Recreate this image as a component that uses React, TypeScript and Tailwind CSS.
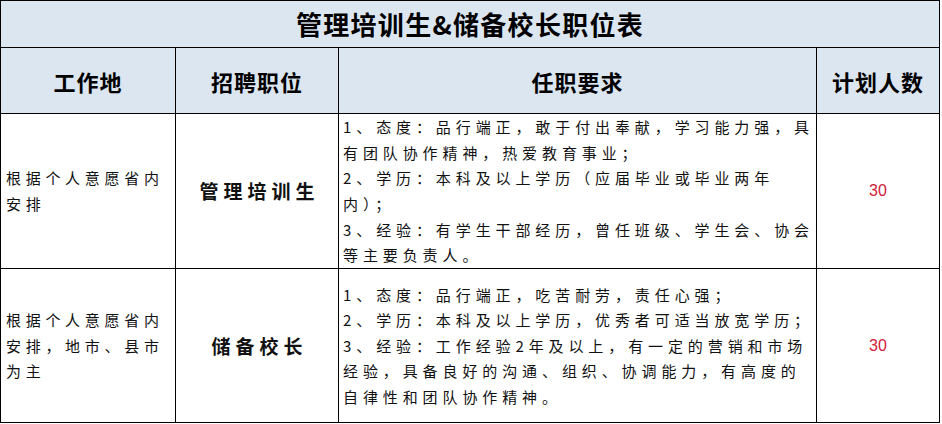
import React from "react";

const row1Lines = [
  "1、态度：品行端正，敢于付出奉献，学习能力强，具",
  "有团队协作精神，热爱教育事业；",
  "2、学历：本科及以上学历（应届毕业或毕业两年",
  "内）；",
  "3、经验：有学生干部经历，曾任班级、学生会、协会",
  "等主要负责人。",
];

const row2Lines = [
  "1、态度：品行端正，吃苦耐劳，责任心强；",
  "2、学历：本科及以上学历，优秀者可适当放宽学历；",
  "3、经验：工作经验2年及以上，有一定的营销和市场",
  "经验，具备良好的沟通、组织、协调能力，有高度的",
  "自律性和团队协作精神。",
];

function Lines({ lines }: { lines: string[] }) {
  return (
    <div className="flex flex-col">
      {lines.map((l, i) => (
        <div key={i} className="whitespace-nowrap">
          {l}
        </div>
      ))}
    </div>
  );
}

export default function App() {
  return (
    <div className="w-[942px] h-[424px] bg-white text-black font-['Noto_Sans_CJK_SC',sans-serif]">
      <table className="table-fixed border-collapse w-[939px]">
        <colgroup>
          <col className="w-[175px]" />
          <col className="w-[163px]" />
          <col className="w-[478px]" />
          <col className="w-[123px]" />
        </colgroup>
        <tbody>
          <tr className="h-[47px]">
            <td
              colSpan={4}
              className="border border-black bg-[#dce6f1] text-center align-middle text-[26px] font-bold tracking-[1.3px] leading-none"
            >
              管理培训生&amp;储备校长职位表
            </td>
          </tr>
          <tr className="h-[66px] bg-[#dce6f1] text-[22px] font-bold leading-none">
            <td className="border border-black text-center align-middle tracking-[1px]">工作地</td>
            <td className="border border-black text-center align-middle tracking-[1px]">招聘职位</td>
            <td className="border border-black text-center align-middle tracking-[1px]">任职要求</td>
            <td className="border border-black text-center align-middle tracking-[1px]">计划人数</td>
          </tr>
          <tr className="h-[155px] text-[15px] leading-[25.6px] text-[#111]">
            <td className="border border-black align-middle pl-[5px] tracking-[4.7px]">
              <Lines lines={["根据个人意愿省内", "安排"]} />
            </td>
            <td className="border border-black align-middle text-center text-[19px] font-bold tracking-[5px] pl-[5px]">
              管理培训生
            </td>
            <td className="border border-black align-middle pl-[4px] tracking-[4.9px]">
              <Lines lines={row1Lines} />
            </td>
            <td className="border border-black align-middle text-center font-['Liberation_Sans',sans-serif] text-[16px] text-[#d0203a]">
              30
            </td>
          </tr>
          <tr className="h-[154px] text-[15px] leading-[25.6px] text-[#111]">
            <td className="border border-black align-middle pl-[5px] tracking-[4.7px]">
              <Lines lines={["根据个人意愿省内", "安排，地市、县市", "为主"]} />
            </td>
            <td className="border border-black align-middle text-center text-[19px] font-bold tracking-[5px] pl-[5px]">
              储备校长
            </td>
            <td className="border border-black align-middle pl-[4px] tracking-[4.9px]">
              <Lines lines={row2Lines} />
            </td>
            <td className="border border-black align-middle text-center font-['Liberation_Sans',sans-serif] text-[16px] text-[#d0203a]">
              30
            </td>
          </tr>
        </tbody>
      </table>
    </div>
  );
}
